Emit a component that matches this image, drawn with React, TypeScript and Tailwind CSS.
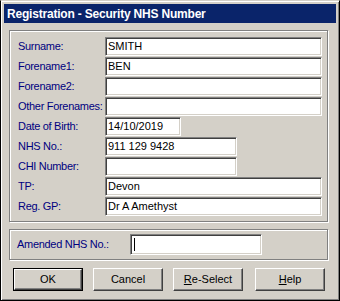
const labelCls = "text-[11px] tracking-[-0.3px] text-[#000080] leading-none";
const fieldCls =
  "h-[19px] bg-white border border-t-[#808080] border-l-[#808080] border-b-white border-r-white shadow-[inset_1px_1px_0_#404040,inset_-1px_-1px_0_#d4d0c8] pl-[2px] text-[11px] leading-[17px] text-black whitespace-nowrap overflow-hidden";

type Row = { label: string; value: string; width: string };

const rows: Row[] = [
  { label: "Surname:", value: "SMITH", width: "w-[217px]" },
  { label: "Forename1:", value: "BEN", width: "w-[217px]" },
  { label: "Forename2:", value: "", width: "w-[217px]" },
  { label: "Other Forenames:", value: "", width: "w-[217px]" },
  { label: "Date of Birth:", value: "14/10/2019", width: "w-[76px]" },
  { label: "NHS No.:", value: "911 129 9428", width: "w-[132px]" },
  { label: "CHI Number:", value: "", width: "w-[132px]" },
  { label: "TP:", value: "Devon", width: "w-[217px]" },
  { label: "Reg. GP:", value: "Dr A Amethyst", width: "w-[217px]" },
];

function Button({ children, isDefault }: { children: React.ReactNode; isDefault?: boolean }) {
  const inner =
    "flex h-full w-full items-center justify-center bg-[#d4d0c8] border border-t-white border-l-white border-r-[#404040] border-b-[#404040] shadow-[inset_-1px_-1px_0_#808080] text-[11px] text-black";
  if (isDefault) {
    return (
      <div className="h-[23px] w-[70px] border border-black">
        <div className={inner}>{children}</div>
      </div>
    );
  }
  return (
    <div className="h-[23px] w-[70px]">
      <div className={inner}>{children}</div>
    </div>
  );
}

export default function App() {
  return (
    <div className="w-[340px] h-[301px] bg-[#d4d0c8] border border-t-[#d4d0c8] border-l-black border-r-black border-b-black shadow-[inset_1px_1px_0_#fff,inset_-1px_-1px_0_#808080] p-[3px] font-['Liberation_Sans',Arial,sans-serif] select-none">
      <div className="h-[19px] bg-[#0a246a] flex items-center pl-[3px]">
        <span className="text-white font-bold text-[12px] tracking-[-0.2px]">
          Registration - Security NHS Number
        </span>
      </div>

      <div className="ml-[5px] mt-[7px] w-[319px] h-[192px] border border-[#808080] shadow-[inset_1px_1px_0_#fff,1px_1px_0_#fff] pt-[6px] pl-[8px] flex flex-col gap-[1px]">
        {rows.map((r) => (
          <div key={r.label} className="flex items-center h-[19px]">
            <div className={`w-[87px] ${labelCls}`}>{r.label}</div>
            <div className={`${fieldCls} ${r.width}`}>{r.value}</div>
          </div>
        ))}
      </div>

      <div className="ml-[5px] mt-[7px] w-[319px] h-[31px] border border-[#808080] shadow-[inset_1px_1px_0_#fff,1px_1px_0_#fff] pl-[7px] flex items-center">
        <div className={`w-[113px] ${labelCls}`}>Amended NHS No.:</div>
        <div className={`${fieldCls} w-[132px] h-[21px] flex items-center`}>
          <span className="block w-[1px] h-[13px] bg-black ml-[1px]" />
        </div>
      </div>

      <div className="mt-[8px] ml-[9px] flex items-center">
        <Button isDefault>OK</Button>
        <div className="ml-[10px]">
          <Button>Cancel</Button>
        </div>
        <div className="ml-[10px]">
          <Button>
            <span>
              <span className="underline">R</span>e-Select
            </span>
          </Button>
        </div>
        <div className="ml-[12px]">
          <Button>
            <span>
              <span className="underline">H</span>elp
            </span>
          </Button>
        </div>
      </div>
    </div>
  );
}
